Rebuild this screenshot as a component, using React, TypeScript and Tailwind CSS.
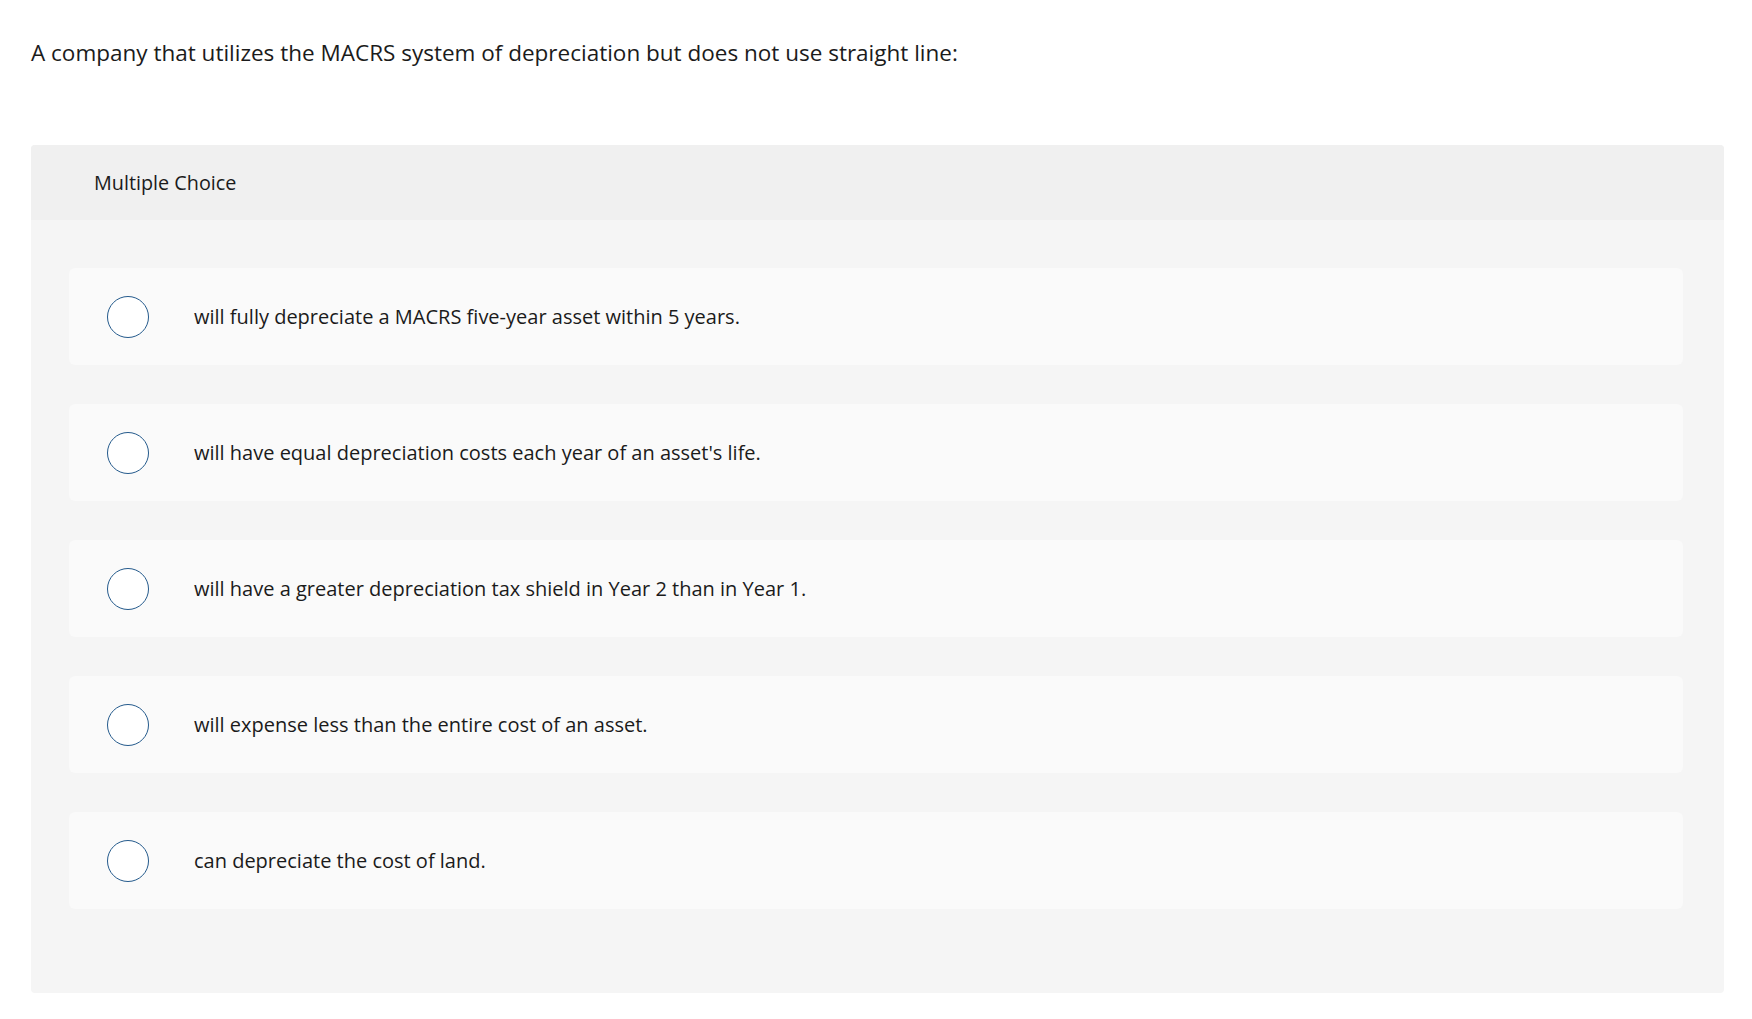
const OPTIONS = [
  "will fully depreciate a MACRS five-year asset within 5 years.",
  "will have equal depreciation costs each year of an asset's life.",
  "will have a greater depreciation tax shield in Year 2 than in Year 1.",
  "will expense less than the entire cost of an asset.",
  "can depreciate the cost of land.",
];

const App = () => {
  return (
    <div className="min-h-screen bg-white font-['Open_Sans',sans-serif] text-[#1b1b1b]">
      <div className="pl-[31px] pr-[28px] pt-[37px]">
        <p className="text-[22.5px] leading-[32px]">
          A company that utilizes the MACRS system of depreciation but does not use straight line:
        </p>

        <div className="mt-[76px] rounded-[4px] bg-[#f5f5f5] pb-[84px]">
          <div className="flex h-[75px] items-center rounded-t-[4px] bg-[#f0f0f0] pl-[63px] text-[19.8px]">
            Multiple Choice
          </div>

          <div className="flex flex-col gap-[39px] pl-[38px] pr-[41px] pt-[48px]">
            {OPTIONS.map((opt) => (
              <label
                key={opt}
                className="flex h-[97px] cursor-pointer items-center rounded-[6px] bg-[#fafafa] pl-[38px]"
              >
                <span className="h-[42px] w-[42px] shrink-0 rounded-full border border-[#245a8c] bg-white" />
                <span className="ml-[45px] text-[20px]">{opt}</span>
              </label>
            ))}
          </div>
        </div>
      </div>
    </div>
  );
};

export default App;
